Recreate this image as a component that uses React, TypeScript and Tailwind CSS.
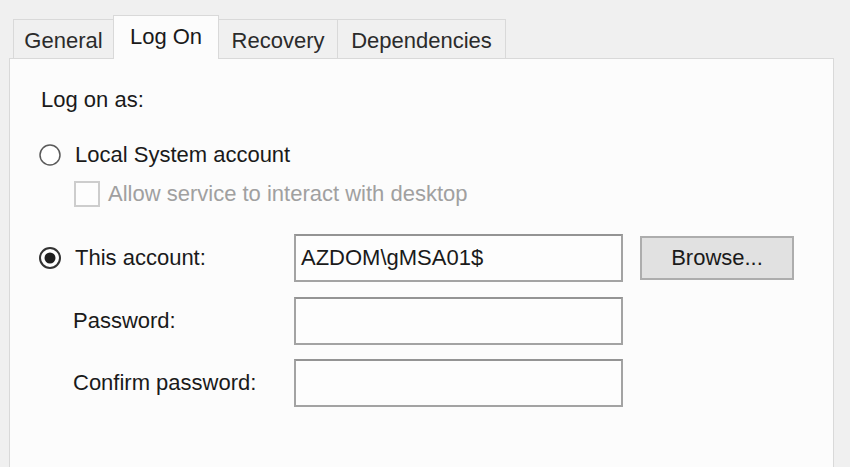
import React from "react";

const Radio = ({ checked }: { checked?: boolean }) => (
    <svg width="24" height="24" viewBox="0 0 24 24" className="shrink-0">
        <circle cx="12" cy="12" r="10" fill="#ffffff" stroke={checked ? "#333333" : "#5a5a5a"} strokeWidth={checked ? 2 : 1.5} />
        {checked && <circle cx="12" cy="12" r="5.5" fill="#1f1f1f" />}
    </svg>
);

const Tab = ({ label, width, active }: { label: string; width: string; active?: boolean }) => {
    return (
        <div
            className={`-ml-px flex justify-center border-x border-t border-[#d9d9d9] pt-[8px] leading-[26px] ${width} ${active
                ? "relative z-10 h-[44px] bg-[#fcfcfc] text-[#1a1a1a]"
                : "mb-px h-[39px] bg-[#f0f0f0] text-[#2b2b2b]"
                }`}
        >
            {label}
        </div>
    );
};

const Field = ({ value }: { value?: string }) => (
    <div className="flex h-[48px] w-[329px] items-center border-2 border-[#a3a3a3] border-t-[#949494] bg-[#fdfdfd] pl-[5px] leading-[26px] text-[#1a1a1a]">
        {value}
    </div>
);

export default function App() {
    return (
        <div className="h-[467px] w-[850px] overflow-hidden bg-[#f0f0f0] font-['Liberation_Sans',Arial,sans-serif] text-[22px] leading-[26px] text-[#1a1a1a]">
            {/* Tabs */}
            <div className="relative flex items-end pl-[14px] pt-[15px]">
                <Tab label="General" width="w-[101px]" />
                <Tab label="Log On" width="w-[106px]" active />
                <Tab label="Recovery" width="w-[120px]" />
                <Tab label="Dependencies" width="w-[169px]" />
            </div>

            {/* Page */}
            <div className="-mt-px ml-[9px] h-[430px] w-[825px] border border-[#d9d9d9] bg-[#fcfcfc] pl-[31px] pt-[28px]">
                <div className="h-[26px]">Log on as:</div>

                <div className="mt-[29px] flex h-[26px] items-center">
                    <div className="-ml-[3px]">
                        <Radio />
                    </div>
                    <span className="ml-[13px]">Local System account</span>
                </div>

                <div className="mt-[12px] flex h-[27px] items-center pl-[33px]">
                    <div className="h-[26px] w-[26px] border-2 border-[#cdcdcd] bg-[#fdfdfd]" />
                    <span className="ml-[8px] text-[#a0a0a0]">Allow service to interact with desktop</span>
                </div>

                {/* This account */}
                <div className="mt-[27px] flex h-[48px] items-center">
                    <div className="flex w-[253px] items-center">
                        <div className="-ml-[3px]">
                            <Radio checked />
                        </div>
                        <span className="ml-[13px]">This account:</span>
                    </div>
                    <Field value="AZDOM\gMSA01$" />
                    <button className="ml-[17px] flex h-[44px] w-[154px] items-center justify-center border-2 border-[#adadad] bg-[#e1e1e1] text-[#1a1a1a]">
                        Browse...
                    </button>
                </div>

                <div className="mt-[15px] flex h-[48px] items-center">
                    <span className="w-[253px] pl-[32px]">Password:</span>
                    <Field />
                </div>

                <div className="mt-[14px] flex h-[48px] items-center">
                    <span className="w-[253px] pl-[32px]">Confirm password:</span>
                    <Field />
                </div>
            </div>
        </div>
    );
}
